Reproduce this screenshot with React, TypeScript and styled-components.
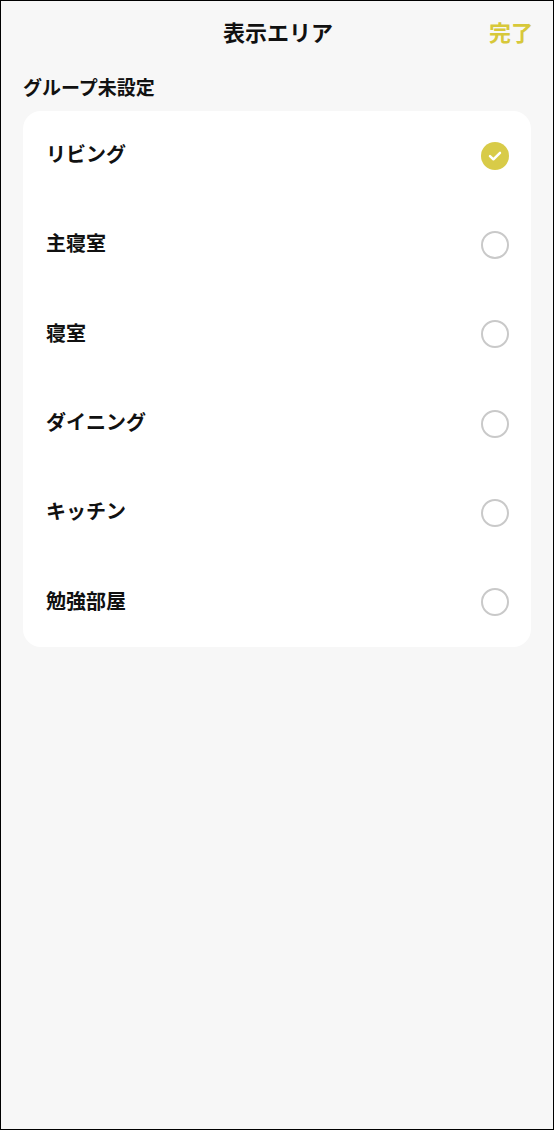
import React, { useState } from "react";
import styled, { createGlobalStyle } from "styled-components";

const GlobalStyle = createGlobalStyle`
  html, body { margin: 0; padding: 0; }
  body {
    font-family: "Noto Sans CJK JP", "Noto Sans", sans-serif;
    background: #f7f7f7;
    color: #111;
  }
  * { box-sizing: border-box; }
`;

const Screen = styled.div`
  width: 554px;
  height: 1130px;
  border: 1px solid #000;
  background: #f7f7f7;
  display: flex;
  flex-direction: column;
`;

const Header = styled.header`
  height: 59px;
  display: grid;
  grid-template-columns: 1fr auto 1fr;
  align-items: center;
  padding: 0 20px 0 22px;
`;

const Title = styled.h1`
  grid-column: 2;
  margin: 0;
  font-size: 22px;
  font-weight: 700;
  color: #111;
  line-height: 1;
`;

const DoneButton = styled.button`
  grid-column: 3;
  justify-self: end;
  background: none;
  border: none;
  padding: 0;
  font-family: inherit;
  font-size: 22px;
  font-weight: 700;
  color: #d7c83a;
  line-height: 1;
  cursor: pointer;
`;

const SectionLabel = styled.h2`
  margin: 0;
  padding: 15px 22px 0;
  height: 51px;
  font-size: 19px;
  font-weight: 700;
  line-height: 24px;
  color: #111;
`;

const Card = styled.ul`
  list-style: none;
  margin: 0 22px;
  padding: 0;
  height: 536px;
  background: #fff;
  border-radius: 18px;
  display: flex;
  flex-direction: column;
`;

const Row = styled.li`
  flex: 1;
  display: flex;
  align-items: center;
  justify-content: space-between;
  padding: 0 22px 0 23px;
  cursor: pointer;
`;

const RowLabel = styled.span`
  font-size: 20px;
  font-weight: 700;
  color: #111;
  line-height: 1;
  margin-top: -3px;
`;

const Radio = styled.span<{ $checked: boolean }>`
  width: 28px;
  height: 28px;
  border-radius: 50%;
  display: flex;
  align-items: center;
  justify-content: center;
  background: ${(p) => (p.$checked ? "#d8cb48" : "transparent")};
  border: ${(p) => (p.$checked ? "none" : "2px solid #c9c9c9")};
`;

const areas = ["リビング", "主寝室", "寝室", "ダイニング", "キッチン", "勉強部屋"];

export default function App() {
  const [selected, setSelected] = useState("リビング");
  return (
    <>
      <GlobalStyle />
      <Screen>
        <Header>
          <Title>表示エリア</Title>
          <DoneButton>完了</DoneButton>
        </Header>
        <SectionLabel>グループ未設定</SectionLabel>
        <Card>
          {areas.map((a) => (
            <Row key={a} onClick={() => setSelected(a)}>
              <RowLabel>{a}</RowLabel>
              <Radio $checked={selected === a}>
                {selected === a && (
                  <svg width="16" height="14" viewBox="0 0 16 14">
                    <path
                      d="M3 7.2 L6.4 10.3 L13 3.8"
                      fill="none"
                      stroke="#fff"
                      strokeWidth="2.5"
                      strokeLinecap="round"
                      strokeLinejoin="round"
                    />
                  </svg>
                )}
              </Radio>
            </Row>
          ))}
        </Card>
      </Screen>
    </>
  );
}
